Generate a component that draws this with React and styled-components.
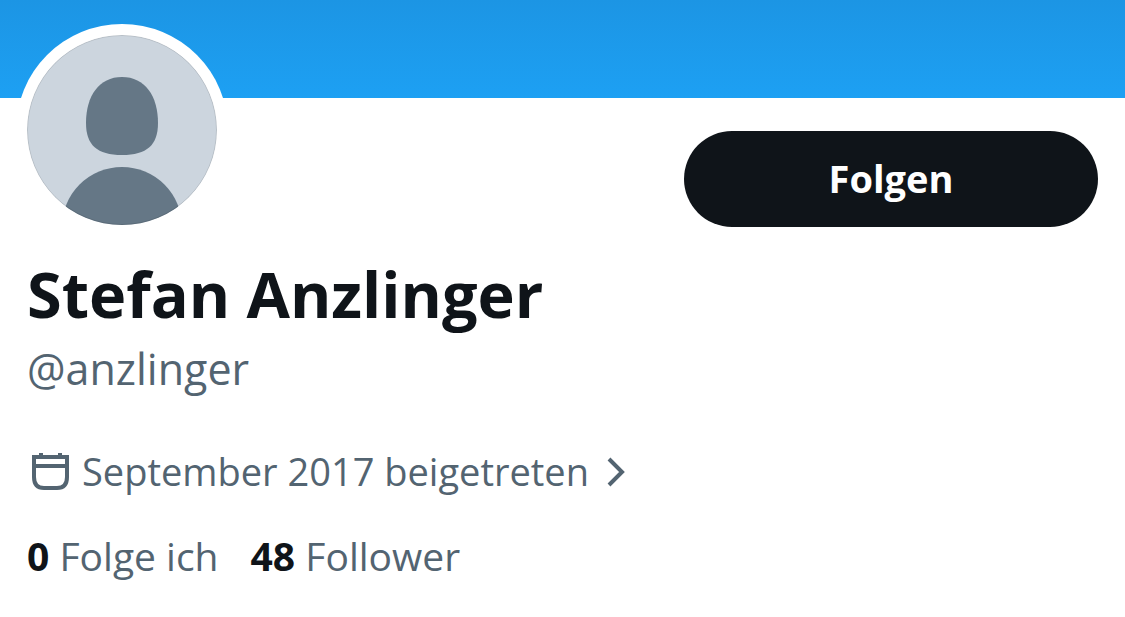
import styled, { createGlobalStyle } from "styled-components";

const GlobalStyle = createGlobalStyle`
  * {
    box-sizing: border-box;
  }
  body {
    margin: 0;
    background: #fff;
    color: #0f1419;
    font-family: "Open Sans", "Noto Sans", sans-serif;
  }
`;

//Styled Components
const Banner = styled.div`
  height: 98px;
  background: linear-gradient(#1c95e4, #1da0f3);
`;

const Content = styled.main`
  padding: 0 27px 36px;
`;

const TopRow = styled.div`
  display: flex;
  align-items: flex-end;
  justify-content: space-between;
  margin-top: -74px;
`;

const Avatar = styled.svg`
  display: block;
  flex: none;
  width: 212px;
  height: 212px;
  margin-left: -11px;
`;

const FollowButton = styled.button`
  flex: 0 1 414px;
  height: 96px;
  margin-bottom: 9px;
  padding: 0 0 2px;
  border: none;
  border-radius: 48px;
  background: #0f1419;
  color: #fff;
  font-family: inherit;
  font-size: 38px;
  font-weight: 700;
  cursor: pointer;
`;

const Name = styled.h1`
  margin: 18px 0 0;
  font-size: 63px;
  line-height: 80px;
  font-weight: 700;
`;

const Handle = styled.p`
  margin: 7px 0 0;
  color: #536471;
  font-size: 43px;
  line-height: 56px;
`;

const Joined = styled.a`
  display: flex;
  align-items: center;
  gap: 12px;
  width: fit-content;
  margin-top: 50px;
  padding-left: 4px;
  color: #536471;
  font-size: 38px;
  line-height: 48px;
  text-decoration: none;
`;

const CalendarIcon = styled.svg`
  flex: none;
  width: 39px;
  height: 40px;
`;

const ChevronIcon = styled.svg`
  flex: none;
  width: 30px;
  height: 34px;
`;

const Stats = styled.nav`
  display: flex;
  flex-wrap: wrap;
  gap: 32px;
  margin-top: 37px;
`;

const StatLink = styled.a`
  color: #536471;
  font-size: 39px;
  line-height: 48px;
  text-decoration: none;
`;

const Count = styled.strong`
  color: #0f1419;
  font-weight: 700;
`;

const stats = [
  { count: 0, label: "Folge ich", href: "#following" },
  { count: 48, label: "Follower", href: "#followers" },
];

const App = () => {
  return (
    <>
      <GlobalStyle />
      <Banner />
      <Content>
        <TopRow>
          <Avatar viewBox="0 0 212 212" role="img" aria-label="Stefan Anzlinger">
            <defs>
              <clipPath id="face">
                <circle cx="106" cy="106" r="95" />
              </clipPath>
            </defs>
            <circle cx="106" cy="106" r="106" fill="#fff" />
            <g clipPath="url(#face)">
              <circle cx="106" cy="106" r="95" fill="#ccd5de" />
              <path
                d="M106 53C129 53 142 72 142 99C142 121 131 131 106 131C81 131 70 121 70 99C70 72 83 53 106 53Z"
                fill="#657786"
              />
              <circle cx="106" cy="203" r="60" fill="#657786" />
            </g>
            <circle
              cx="106"
              cy="106"
              r="94.5"
              fill="none"
              stroke="#000"
              strokeOpacity="0.1"
            />
          </Avatar>
          <FollowButton type="button">Folgen</FollowButton>
        </TopRow>

        <Name>Stefan Anzlinger</Name>
        <Handle>@anzlinger</Handle>

        <Joined href="#about">
          <CalendarIcon viewBox="0 0 39 40" aria-hidden="true">
            <path
              d="M3 6H36V26Q36 37 26 37H13Q3 37 3 26ZM3 15H36M10 2V6M29 2V6"
              fill="none"
              stroke="currentColor"
              strokeWidth="4"
            />
          </CalendarIcon>
          September 2017 beigetreten
          <ChevronIcon viewBox="0 0 30 34" aria-hidden="true">
            <path
              d="M8 5L21 18L8 31"
              fill="none"
              stroke="currentColor"
              strokeWidth="4"
            />
          </ChevronIcon>
        </Joined>

        <Stats>
          {stats.map(({ count, label, href }) => (
            <StatLink key={label} href={href}>
              <Count>{count}</Count> {label}
            </StatLink>
          ))}
        </Stats>
      </Content>
    </>
  );
};

export default App;
